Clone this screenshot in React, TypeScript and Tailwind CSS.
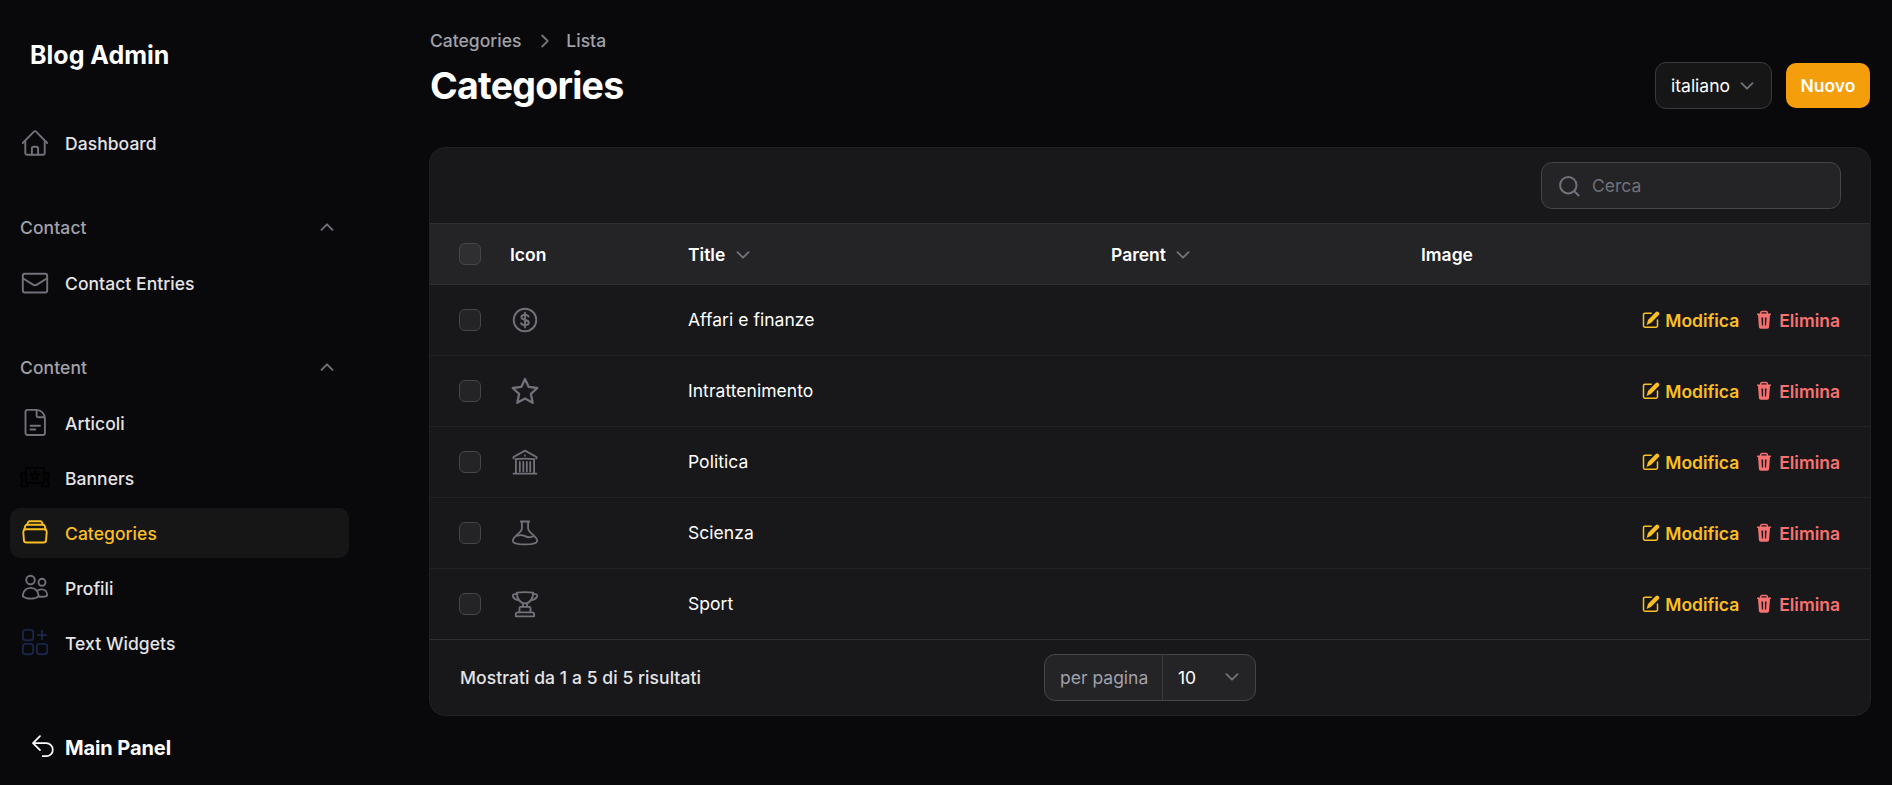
import React from "react";

type IconProps = { className?: string };

function Svg({ className = "", size = 30, children }: { className?: string; size?: number; children: React.ReactNode }) {
  return (
    <svg
      width={size}
      height={size}
      viewBox={`0 0 ${size} ${size}`}
      fill="none"
      stroke="currentColor"
      strokeWidth="1.9"
      strokeLinecap="round"
      strokeLinejoin="round"
      className={`shrink-0 ${className}`}
    >
      {children}
    </svg>
  );
}

const HomeIcon = ({ className }: IconProps) => (
  <Svg className={className}>
    <path d="M2.8 15 13.9 3.6a1.5 1.5 0 0 1 2.2 0L27.2 15" />
    <path d="M5.3 13v12a1.8 1.8 0 0 0 1.8 1.8h15.8a1.8 1.8 0 0 0 1.8-1.8V13" />
    <path d="M11.9 26.5v-6a1.8 1.8 0 0 1 1.8-1.8h2.6a1.8 1.8 0 0 1 1.8 1.8v6" />
  </Svg>
);

const EnvelopeIcon = ({ className }: IconProps) => (
  <Svg className={className}>
    <rect x="2.8" y="5.8" width="24.4" height="18.7" rx="2" />
    <path d="m2.8 10.2 9.8 6.2a4.2 4.2 0 0 0 4.8 0l9.8-6.2" />
  </Svg>
);

const DocumentIcon = ({ className }: IconProps) => (
  <Svg className={className}>
    <path d="M7.4 1.9h8.8c4.9 0 8.7 3.8 8.7 8.7v14.5a1.9 1.9 0 0 1-1.9 1.9H7.4a1.9 1.9 0 0 1-1.9-1.9V3.8a1.9 1.9 0 0 1 1.9-1.9Z" />
    <path d="M16.6 2v5.8a1.5 1.5 0 0 0 1.5 1.5h6.5M10.5 17.7h9.5M10.5 21.5h4.8" />
  </Svg>
);

const BannerIcon = ({ className }: IconProps) => (
  <Svg className={className}>
    <rect x="5.8" y="4.9" width="18.5" height="14.8" rx="1" />
    <path d="M5.5 10.5H.8l1.7 6.5L.8 23.2h6.7v-3M24.5 10.5h4.7L27.5 17l1.7 6.2h-6.7v-3" />
    <path d="m15 8.3 1.3 2.7 3 .4-2.2 2.1.5 2.9-2.6-1.4-2.6 1.4.5-2.9-2.2-2.1 3-.4Z" />
  </Svg>
);

const StackIcon = ({ className }: IconProps) => (
  <Svg className={className}>
    <path d="m7 6.700 1.100-2.400a1.500 1.500 0 0 1 1.400-1h11a1.500 1.500 0 0 1 1.400 1l1.100 2.400" />
    <path d="m4.300 11.300 1.100-3.500a1.500 1.500 0 0 1 1.400-1h16.400a1.500 1.500 0 0 1 1.400 1l1.100 3.500" />
    <path d="M6 11.300h18a2.700 2.700 0 0 1 2.700 3l-.6 7.800a2.600 2.600 0 0 1-2.600 2.400h-17a2.600 2.600 0 0 1-2.600-2.400l-.6-7.800a2.700 2.700 0 0 1 2.700-3Z" />
  </Svg>
);

const UsersIcon = ({ className }: IconProps) => (
  <Svg className={className}>
    <circle cx="10.5" cy="7" r="4.3" />
    <circle cx="22" cy="9.3" r="3.5" />
    <path d="M10.7 14.9c4.6 0 7.9 3.3 7.9 8.2-1.5 1.6-4.5 2.5-7.9 2.5s-6.4-.9-7.9-2.5c0-4.9 3.3-8.2 7.9-8.2Z" />
    <path d="M17.200 18c1.200-1.100 2.800-1.600 4.400-1.600 3.200 0 5.600 2.200 5.600 6-1.500 1.100-4.800 1.700-8.500 1.100" />
  </Svg>
);

const WidgetsIcon = ({ className }: IconProps) => (
  <Svg className={className}>
    <rect x="2.9" y="1.9" width="10.3" height="10.3" rx="2.6" />
    <rect x="2.9" y="15.9" width="10.3" height="10.3" rx="2.6" />
    <rect x="16.900" y="15.900" width="10.300" height="10.300" rx="2.600" />
    <path d="M22 2.800v8.600M17.700 7.100h8.600" />
  </Svg>
);

const ReturnIcon = ({ className = "" }: IconProps) => (
  <Svg className={`[stroke-width:1.7] ${className}`} size={24}>
    <path d="M9 2.200 2 9.200l7 7M2 9.200h13.300a6.500 6.500 0 0 1 0 13h-3.600" />
  </Svg>
);

const DollarIcon = () => (
  <Svg>
    <circle cx="15" cy="15" r="11.300" />
    <path d="M15 7.600v14.800M18.600 11.600c-.5-1.300-1.900-1.900-3.600-1.900-2 0-3.600.9-3.600 2.600 0 3.800 7.400 1.600 7.400 5.300 0 1.700-1.700 2.600-3.800 2.600-1.900 0-3.400-.7-3.900-2" />
  </Svg>
);

const StarIcon = () => (
  <Svg className="[stroke-width:2.3]">
    <path d="m15 3 3.600 7.800 8.700 1.200-6.400 5.900 1.800 8.900L15 22.600l-7.700 4.200 1.800-8.900L2.700 12l8.700-1.200Z" />
  </Svg>
);

const BankIcon = () => (
  <Svg className="[stroke-width:1.8]">
    <path d="M3.500 11.300V10L15 3.600 26.500 10v1.300M3.500 26.600h23M5.900 12.300v14M24.100 12.300v14M5.500 12.100c6-.5 13-.5 19 0" />
    <path d="M9.800 15v9.400M13.300 15v9.400M16.800 15v9.400M20.200 15v9.400M15 8.500v.2" />
  </Svg>
);

const FlaskIcon = () => (
  <Svg className="[stroke-width:1.8]">
    <path d="M10.700 3.500h8.600M11.900 3.500v7c0 2-1.200 3.100-3 4.700-2.800 2.500-6.100 5-6.100 7.500 0 2.500 4 3.700 12.200 3.700s12.200-1.200 12.200-3.700c0-2.500-3.300-5-6.100-7.500-1.800-1.600-3-2.700-3-4.700v-7" />
    <path d="M7.300 17.800c2.800-1.300 5-1 7.700.3s5 1.700 8 .4" />
  </Svg>
);

const TrophyIcon = () => (
  <Svg className="[stroke-width:1.85]">
    <path d="M6.700 3.600c5-.6 11.600-.6 16.600 0-.2 5.900-3.200 10.700-8.300 10.700S6.900 9.500 6.700 3.600Z" />
    <path d="M7 5.100H4.300c-2.800 0-1.700 5.700 4.700 6M23 5.100h2.700c2.800 0 1.700 5.700-4.700 6M13.300 14.500l-.7 3.300M16.700 14.500l.7 3.300M9.500 23.100v-4.200a1 1 0 0 1 1-1h9a1 1 0 0 1 1 1v4.200M5.800 27.300v-1.900a2 2 0 0 1 2-2h14.400a2 2 0 0 1 2 2v1.900Z" />
  </Svg>
);

const EditIcon = () => (
  <svg width="18" height="18" viewBox="0 0 18 18" fill="none" className="shrink-0">
    <path d="M9.200 2.200H3A1.500 1.500 0 0 0 1.500 3.700v11A1.500 1.500 0 0 0 3 16.200h11a1.500 1.500 0 0 0 1.500-1.500V9" stroke="currentColor" strokeWidth="1.500" strokeLinecap="round" />
    <path d="M13.600 1.300a2.100 2.100 0 0 1 3 3L8.900 12 4.600 14 6 9Z" fill="currentColor" />
  </svg>
);

const TrashIcon = () => (
  <svg width="16" height="20" viewBox="0 0 16 20" className="shrink-0">
    <path d="M4.600 4V2.900a1.400 1.400 0 0 1 1.400-1.400h4a1.400 1.400 0 0 1 1.400 1.400V4M1.600 4.300h12.800" fill="none" stroke="currentColor" strokeWidth="1.400" strokeLinecap="round" />
    <path fillRule="evenodd" fill="currentColor" d="M2 4.500h12l-.9 12.400a1.900 1.900 0 0 1-1.900 1.800H4.800a1.900 1.900 0 0 1-1.900-1.800ZM5.400 7.500l.5 8h1.200v-8ZM8.900 7.500v8h1.200l.5-8Z" />
  </svg>
);

const SearchIcon = () => (
  <Svg size={24} className="text-[#71717a] [stroke-width:2]">
    <circle cx="11.300" cy="11.200" r="8.200" />
    <path d="m17.300 17.200 4.300 4.300" />
  </Svg>
);

const Chevron = ({ className = "" }: IconProps) => (
  <svg width="14" height="8" viewBox="0 0 14 8" fill="none" stroke="currentColor" strokeWidth="1.900" strokeLinecap="round" strokeLinejoin="round" className={`shrink-0 ${className}`}>
    <path d="m1.500 1.200 5.500 5.500 5.500-5.500" />
  </svg>
);

function NavItem({ icon, label, active = false }: { icon: React.ReactNode; label: string; active?: boolean }) {
  return (
    <a
      className={`flex h-[50px] items-center gap-[15px] rounded-[10px] px-2.5 font-medium tracking-[0.05px] ${
        active ? "bg-[#161617] text-[#fbbf24]" : "text-[#e4e4e7]"
      }`}
    >
      {icon}
      <span>{label}</span>
    </a>
  );
}

function NavGroup({ label, children }: { label: string; children: React.ReactNode }) {
  return (
    <section>
      <div className="flex h-[50px] items-center justify-between pr-[15px] pl-2.5 font-medium tracking-[0.1px] text-[#a1a1aa]">
        <span>{label}</span>
        <Chevron className="rotate-180 text-[#71717a]" />
      </div>
      <nav className="mt-1.5 flex flex-col gap-[5px]">{children}</nav>
    </section>
  );
}

const Checkbox = () => <span className="block size-[22px] rounded-[6px] border border-[#464648] bg-white/5" />;

const columns = "grid grid-cols-[51px_178px_423px_310px_1fr] items-center";

const rows = [
  { title: "Affari e finanze", icon: <DollarIcon /> },
  { title: "Intrattenimento", icon: <StarIcon /> },
  { title: "Politica", icon: <BankIcon /> },
  { title: "Scienza", icon: <FlaskIcon /> },
  { title: "Sport", icon: <TrophyIcon /> },
];

export default function App() {
  return (
    <div className="flex h-[785px] overflow-hidden bg-[#09090b] font-['Inter',sans-serif] text-[17.5px] leading-[25px] text-white">
      <aside className="w-[429px] shrink-0 pr-20 pl-2.5">
        <div className="pt-[39px] pl-5 text-[25px] leading-8 font-bold">Blog Admin</div>
        <div className="mt-[47px]">
          <NavItem icon={<HomeIcon className="text-[#71717a]" />} label="Dashboard" />
        </div>
        <div className="mt-[34px]">
          <NavGroup label="Contact">
            <NavItem icon={<EnvelopeIcon className="text-[#71717a]" />} label="Contact Entries" />
          </NavGroup>
        </div>
        <div className="mt-[34px]">
          <NavGroup label="Content">
            <NavItem icon={<DocumentIcon className="text-[#71717a]" />} label="Articoli" />
            <NavItem icon={<BannerIcon className="text-black" />} label="Banners" />
            <NavItem icon={<StackIcon />} label="Categories" active />
            <NavItem icon={<UsersIcon className="text-[#71717a]" />} label="Profili" />
            <NavItem icon={<WidgetsIcon className="text-[#1b2548]" />} label="Text Widgets" />
          </NavGroup>
        </div>
        <a className="mt-[68px] flex items-start gap-[10px] pl-[21px] text-[20px] leading-[25px] font-bold tracking-[-0.1px]">
          <ReturnIcon className="-mt-0.5" />
          <span>Main Panel</span>
        </a>
      </aside>

      <main className="w-[1442px] shrink-0 pt-7">
        <header className="flex items-start justify-between pr-px pl-px">
          <div>
            <div className="flex items-center font-medium text-[#a1a1aa]">
              <span>Categories</span>
              <Chevron className="mr-[14px] ml-[17px] -rotate-90 text-[#71717a]" />
              <span>Lista</span>
            </div>
            <h1 className="mt-2.5 text-[37.5px] leading-[45px] font-bold tracking-[-0.75px]">Categories</h1>
          </div>
          <div className="flex items-center gap-[14px] pt-[34px]">
            <button className="flex h-[47px] w-[117px] items-center justify-between rounded-[11px] border border-[#3a3a3c] bg-[#161617] pr-[17px] pl-[15px]">
              <span>italiano</span>
              <Chevron className="text-[#71717a]" />
            </button>
            <button className="h-[45px] w-[84px] rounded-[10px] bg-[#f59e0b] font-semibold">Nuovo</button>
          </div>
        </header>

        <div className="mt-[38px] h-[569px] overflow-hidden rounded-[16px] border border-[#212123] bg-[#18181b]">
          <div className="flex h-[75px] items-center justify-end pr-[29px]">
            <div className="flex h-[47px] w-[300px] items-center gap-[11px] rounded-[11px] border border-[#464648] bg-[#242427] pl-[15px] text-[#71717a]">
              <SearchIcon />
              <span>Cerca</span>
            </div>
          </div>
          <div className={`${columns} h-[61px] border-t border-[#2f2f31] bg-[#242427] pl-[29px] font-semibold`}>
            <Checkbox />
            <span>Icon</span>
            <span className="flex items-center gap-[11px]">
              Title <Chevron className="mt-0.5 text-[#71717a]" />
            </span>
            <span className="flex items-center gap-[10px]">
              Parent <Chevron className="mt-0.5 text-[#71717a]" />
            </span>
            <span>Image</span>
          </div>
          {rows.map((row, i) => (
            <div
              key={row.title}
              className={`${columns} h-[71px] border-t pr-[30px] pl-[29px] ${i === 0 ? "border-[#2f2f31]" : "border-[#232326]"}`}
            >
              <Checkbox />
              <span className="text-[#71717a]">{row.icon}</span>
              <span className="pb-0.5 tracking-[0.04px]">{row.title}</span>
              <span />
              <div className="flex items-center justify-end font-semibold">
                <a className="flex items-center gap-[5px] text-[#fbbf24]">
                  <EditIcon />
                  <span className="tracking-[-0.05px]">Modifica</span>
                </a>
                <a className="ml-[17px] flex items-center gap-[7px] text-[#f87171]">
                  <TrashIcon />
                  Elimina
                </a>
              </div>
            </div>
          ))}
          <footer className="grid h-[76px] grid-cols-3 items-center border-t border-[#2f2f31] pr-[30px] pb-px pl-[30px]">
            <span className="font-medium tracking-[0.07px] text-[#e4e4e7]">Mostrati da 1 a 5 di 5 risultati</span>
            <div className="flex h-[47px] w-[212px] items-stretch justify-self-center rounded-[11px] border border-[#464648] bg-[#242427]">
              <span className="flex w-[118px] items-center border-r border-[#3a3a3d] pl-[15px] text-[#a1a1aa]">per pagina</span>
              <span className="flex flex-1 items-center justify-between pr-[16px] pl-[15px]">
                10 <Chevron className="text-[#71717a]" />
              </span>
            </div>
          </footer>
        </div>
      </main>
    </div>
  );
}
